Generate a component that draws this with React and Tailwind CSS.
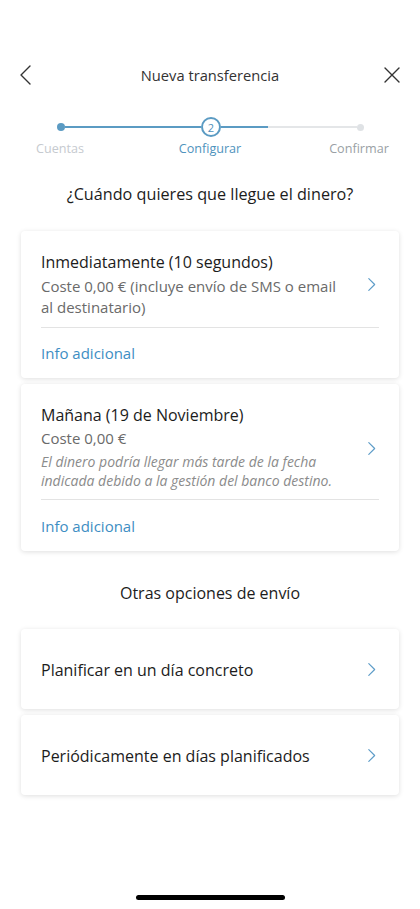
import React from "react";

function Chevron({ className }) {
  return (
    <svg viewBox="0 0 10 16" className={className} fill="none" stroke="currentColor" strokeWidth="1.3" strokeLinecap="round" strokeLinejoin="round">
      <path d="M2 1.5 L8.5 8 L2 14.5" />
    </svg>
  );
}

function Card({ children, className = "" }) {
  return (
    <div className={"mx-[21px] bg-white rounded-[4px] shadow-[0_1px_5px_rgba(0,0,0,0.13)] " + className}>
      {children}
    </div>
  );
}

export default function App() {
  return (
    <div className="w-[420px] h-[909px] bg-white relative overflow-hidden text-[#1c1c1c]" style={{ fontFamily: '"Open Sans", sans-serif' }}>
      {/* header */}
      <div className="flex items-center justify-between h-[24px] mt-[63px] px-[19px]">
        <svg viewBox="0 0 14 20" className="w-[14px] h-[20px] text-[#333]" fill="none" stroke="currentColor" strokeWidth="1.4" strokeLinecap="round" strokeLinejoin="round">
          <path d="M11 1 L2 10 L11 19" />
        </svg>
        <span className="text-[14.7px] text-[#333] ml-[4px]">Nueva transferencia</span>
        <svg viewBox="0 0 18 18" className="w-[18px] h-[18px] text-[#333]" fill="none" stroke="currentColor" strokeWidth="1.4" strokeLinecap="round">
          <path d="M2 2 L16 16 M16 2 L2 16" />
        </svg>
      </div>

      {/* stepper */}
      <div className="flex items-center ml-[57px] mt-[31px] h-[18px]">
        <div className="w-[8px] h-[8px] rounded-full bg-[#5b9bc3]" />
        <div className="w-[136px] h-[2px] bg-[#5b9bc3]" />
        <div className="w-[20px] h-[20px] rounded-full border-2 border-[#5b9bc3] bg-white flex items-center justify-center text-[11px] text-[#4d8fba] leading-none">2</div>
        <div className="w-[47px] h-[2px] bg-[#5b9bc3]" />
        <div className="w-[89px] h-[2px] bg-[#e4e6e8]" />
        <div className="w-[7px] h-[7px] rounded-full bg-[#dfe2e5]" />
      </div>
      <div className="flex ml-[10px] mt-[4px] text-[12.6px] leading-[18px]">
        <span className="w-[100px] text-center text-[#c6cacf]">Cuentas</span>
        <span className="w-[100px] ml-[50px] text-center text-[#4f93bd]">Configurar</span>
        <span className="w-[100px] ml-[49px] text-center text-[#9a9fa5]">Confirmar</span>
      </div>

      <p className="text-center text-[16.2px] leading-[24px] mt-[24px] text-[#1c1c1c]">¿Cuándo quieres que llegue el dinero?</p>

      {/* card 1 */}
      <Card className="mt-[25px] px-[20px] pt-[20px] pb-[14px]">
        <div className="flex items-center">
          <div className="flex-1">
            <p className="text-[16px] leading-[22px]">Inmediatamente (10 segundos)</p>
            <p className="text-[15px] leading-[21px] mt-[3px] text-[#6a6a6a] pr-[2px]">Coste 0,00 € (incluye envío de SMS o email al destinatario)</p>
          </div>
          <div className="w-[30px] flex justify-end pr-[3px]">
            <Chevron className="w-[9px] h-[15px] text-[#5d9cc8]" />
          </div>
        </div>
        <div className="h-px bg-[#e3e3e3] mt-[9px]" />
        <p className="text-[15px] leading-[21px] mt-[15px] text-[#3d8ec3]">Info adicional</p>
      </Card>

      {/* card 2 */}
      <Card className="mt-[6px] px-[20px] pt-[20px] pb-[14px]">
        <div className="flex items-center">
          <div className="flex-1">
            <p className="text-[16px] leading-[22px]">Mañana (19 de Noviembre)</p>
            <p className="text-[15px] leading-[21px] mt-[2px] text-[#6a6a6a]">Coste 0,00 €</p>
            <p className="text-[14px] leading-[19px] mt-[3px] italic text-[#8b8b8b]">El dinero podría llegar más tarde de la fecha indicada debido a la gestión del banco destino.</p>
          </div>
          <div className="w-[30px] flex justify-end pr-[3px] mt-[2px]">
            <Chevron className="w-[9px] h-[15px] text-[#5d9cc8]" />
          </div>
        </div>
        <div className="h-px bg-[#e3e3e3] mt-[9px]" />
        <p className="text-[15px] leading-[21px] mt-[16px] text-[#3d8ec3]">Info adicional</p>
      </Card>

      <p className="text-center text-[16px] leading-[22px] mt-[31px]">Otras opciones de envío</p>

      <Card className="mt-[25px] h-[80px] px-[20px] flex items-center justify-between">
        <span className="text-[16px] leading-[22px] pt-[2px]">Planificar en un día concreto</span>
        <Chevron className="w-[9px] h-[15px] text-[#5d9cc8] mr-[3px]" />
      </Card>
      <Card className="mt-[6px] h-[80px] px-[20px] flex items-center justify-between">
        <span className="text-[16px] leading-[22px] pt-[2px]">Periódicamente en días planificados</span>
        <Chevron className="w-[9px] h-[15px] text-[#5d9cc8] mr-[3px]" />
      </Card>

      {/* home indicator */}
      <div className="absolute left-[136px] top-[895px] w-[149px] h-[5px] rounded-full bg-black" />
    </div>
  );
}
